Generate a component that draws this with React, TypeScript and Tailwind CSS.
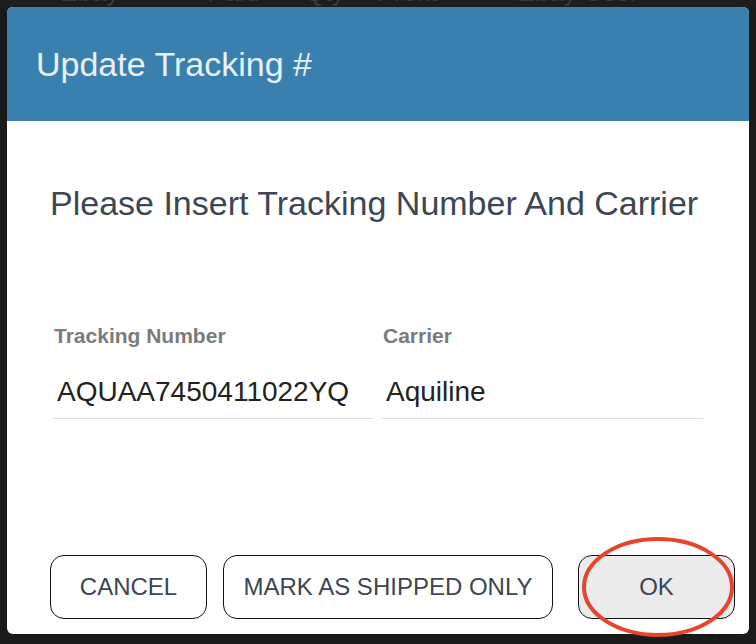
const font = { fontFamily: '"Liberation Sans", Arial, sans-serif' };

const Field = ({ label, value, className }: { label: string; value: string; className?: string }) => (
  <div className={className}>
    <div className="pl-[1px] text-[21px] leading-[24px] font-bold text-[#7b7b7b]">{label}</div>
    <div className="mt-[26px] pl-[4px] pb-[8px] text-[28px] leading-[36px] text-[#222] border-b border-[#dedede]">
      {value}
    </div>
  </div>
);

export default function App() {
  return (
    <div className="relative w-[756px] h-[644px] bg-[#1a1a1a] overflow-hidden" style={font}>
      {/* page behind the modal, mostly hidden */}
      <div className="h-[7px] overflow-hidden bg-[#1d1d1d]">
        <div className="flex -mt-[22px] text-[26px] leading-[28px] text-[#3a3a3a] whitespace-nowrap">
          <span className="ml-[60px]">Ebay</span>
          <span className="ml-[88px]">Paid</span>
          <span className="ml-[45px]">Qty</span>
          <span className="ml-[32px]">Profit</span>
          <span className="ml-[80px]">Ebay User</span>
        </div>
      </div>

      <div className="mx-[7px] w-[742px] h-[627px] bg-white rounded-[6px] overflow-hidden flex flex-col">
        <div className="h-[114px] bg-[#3a80ae] flex items-center pl-[29px]">
          <h1 className="text-[34px] leading-[40px] text-[#e9f1f8]">Update Tracking #</h1>
        </div>

        <div className="flex-1 flex flex-col">
          <p className="mt-[64px] ml-[43px] text-[34px] leading-[36px] text-[#3d4654]">
            Please Insert Tracking Number And Carrier
          </p>

          <div className="mt-[103px] ml-[46px] flex gap-[9px]">
            <Field label="Tracking Number" value="AQUAA7450411022YQ" className="w-[320px]" />
            <Field label="Carrier" value="Aquiline" className="w-[321px]" />
          </div>

          <div className="mt-auto mb-[15px] ml-[43px] flex">
            <button className="w-[157px] h-[64px] rounded-[14px] border border-[#111] bg-white text-[24px] text-[#3d4654]">
              CANCEL
            </button>
            <button className="ml-[16px] w-[330px] h-[64px] rounded-[14px] border border-[#111] bg-white text-[24px] text-[#3d4654]">
              MARK AS SHIPPED ONLY
            </button>
            <button className="ml-[25px] w-[157px] h-[64px] rounded-[14px] border border-[#111] bg-[#ebebeb] text-[24px] text-[#3d4654]">
              OK
            </button>
          </div>
        </div>
      </div>

      {/* red annotation circle around OK */}
      <svg className="absolute left-[580px] top-[535px]" width="156" height="104" viewBox="0 0 156 104">
        <ellipse cx="78" cy="52" rx="74" ry="48" fill="none" stroke="#e6452c" strokeWidth="4" />
      </svg>
    </div>
  );
}
